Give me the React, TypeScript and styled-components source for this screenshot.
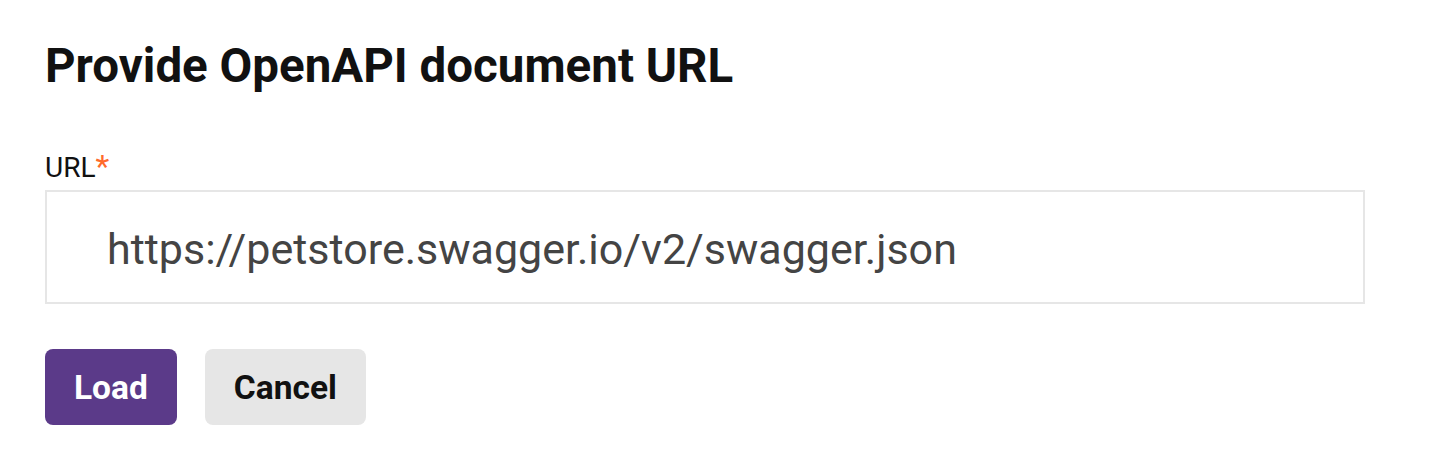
import React, { useState } from 'react';
import styled, { createGlobalStyle } from 'styled-components';

const GlobalStyle = createGlobalStyle`
  html, body {
    margin: 0;
    padding: 0;
    background: #ffffff;
  }
  body {
    font-family: Roboto, "Liberation Sans", Arial, sans-serif;
    color: #111111;
  }
`;

const Page = styled.div`
  display: flex;
  flex-direction: column;
  padding: 38px 45px 0 45px;
  width: 1320px;
`;

const Title = styled.h2`
  margin: 0;
  font-size: 47.5px;
  line-height: 56px;
  font-weight: 700;
  color: #111111;
`;

const Field = styled.div`
  display: flex;
  flex-direction: column;
  gap: 6px;
  margin-top: 58px;
`;

const Label = styled.label`
  display: block;
  height: 32px;
  font-size: 28px;
  line-height: 32px;
  font-weight: 400;
  color: #111111;
`;

const Required = styled.span`
  color: #ff6a2b;
  font-size: 32px;
  line-height: 0;
`;

const UrlInput = styled.input`
  box-sizing: border-box;
  width: 100%;
  height: 114px;
  border: 2px solid #e6e6e6;
  border-radius: 0;
  padding: 3px 60px 0;
  font-family: Roboto, "Liberation Sans", Arial, sans-serif;
  font-size: 43px;
  color: #444444;
  background: #ffffff;
  outline: none;
`;

const Actions = styled.div`
  display: flex;
  gap: 28px;
  margin-top: 45px;
`;

const Button = styled.button<{ $primary?: boolean }>`
  height: 76px;
  padding: 0 29px;
  border: none;
  border-radius: 8px;
  font-family: Roboto, "Liberation Sans", Arial, sans-serif;
  font-size: 33.5px;
  font-weight: 700;
  cursor: pointer;
  background: ${p => (p.$primary ? '#5b3a89' : '#e6e6e6')};
  color: ${p => (p.$primary ? '#ffffff' : '#111111')};
`;

export default function App() {
  const [url, setUrl] = useState('https://petstore.swagger.io/v2/swagger.json');

  return (
    <>
      <GlobalStyle />
      <Page>
        <Title>Provide OpenAPI document URL</Title>
        <Field>
          <Label htmlFor="doc-url">
            URL<Required>*</Required>
          </Label>
          <UrlInput id="doc-url" value={url} onChange={e => setUrl(e.target.value)} />
        </Field>
        <Actions>
          <Button $primary>Load</Button>
          <Button>Cancel</Button>
        </Actions>
      </Page>
    </>
  );
}
